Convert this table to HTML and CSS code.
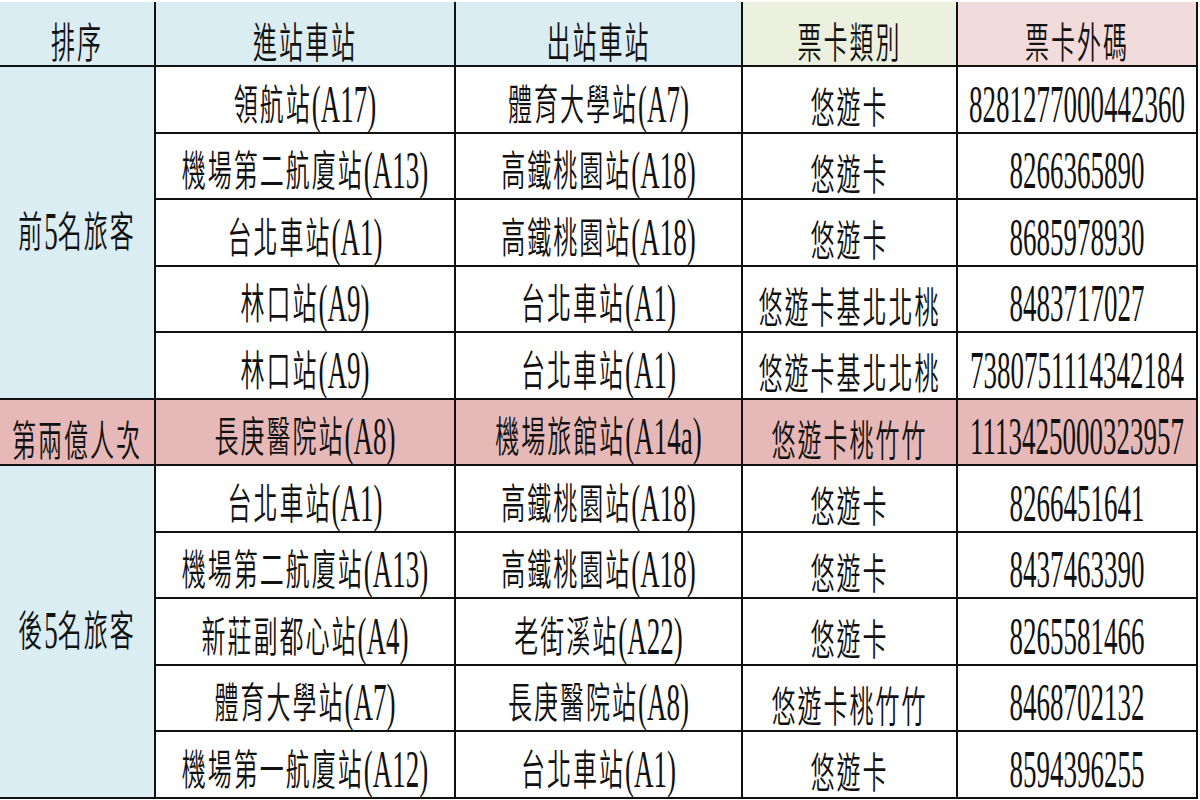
FILE: index.html
```html
<!DOCTYPE html>
<html lang="zh-Hant">
<head>
<meta charset="utf-8">
<title>桃園機場捷運 旅客排序</title>
<link rel="stylesheet" href="styles.css">
</head>
<body>
<div class="sheet">
  <div class="cell blue hd"><span class="t">排序</span></div>
  <div class="cell blue hd"><span class="t">進站車站</span></div>
  <div class="cell blue hd"><span class="t">出站車站</span></div>
  <div class="cell olive hd"><span class="t">票卡類別</span></div>
  <div class="cell pink hd"><span class="t">票卡外碼</span></div>

  <div class="cell blue group"><span class="t">前<span class="l">5</span>名旅客</span></div>
  <div class="cell"><span class="t">領航站<span class="l">(A17)</span></span></div>
  <div class="cell"><span class="t">體育大學站<span class="l">(A7)</span></span></div>
  <div class="cell"><span class="t">悠遊卡</span></div>
  <div class="cell"><span class="t"><span class="l">8281277000442360</span></span></div>

  <div class="cell"><span class="t">機場第二航廈站<span class="l">(A13)</span></span></div>
  <div class="cell"><span class="t">高鐵桃園站<span class="l">(A18)</span></span></div>
  <div class="cell"><span class="t">悠遊卡</span></div>
  <div class="cell"><span class="t"><span class="l">8266365890</span></span></div>

  <div class="cell"><span class="t">台北車站<span class="l">(A1)</span></span></div>
  <div class="cell"><span class="t">高鐵桃園站<span class="l">(A18)</span></span></div>
  <div class="cell"><span class="t">悠遊卡</span></div>
  <div class="cell"><span class="t"><span class="l">8685978930</span></span></div>

  <div class="cell"><span class="t">林口站<span class="l">(A9)</span></span></div>
  <div class="cell"><span class="t">台北車站<span class="l">(A1)</span></span></div>
  <div class="cell"><span class="t">悠遊卡基北北桃</span></div>
  <div class="cell"><span class="t"><span class="l">8483717027</span></span></div>

  <div class="cell"><span class="t">林口站<span class="l">(A9)</span></span></div>
  <div class="cell"><span class="t">台北車站<span class="l">(A1)</span></span></div>
  <div class="cell"><span class="t">悠遊卡基北北桃</span></div>
  <div class="cell"><span class="t"><span class="l">7380751114342184</span></span></div>

  <div class="cell rose"><span class="t">第兩億人次</span></div>
  <div class="cell rose"><span class="t">長庚醫院站<span class="l">(A8)</span></span></div>
  <div class="cell rose"><span class="t">機場旅館站<span class="l">(A14a)</span></span></div>
  <div class="cell rose"><span class="t">悠遊卡桃竹竹</span></div>
  <div class="cell rose"><span class="t"><span class="l">1113425000323957</span></span></div>

  <div class="cell blue group"><span class="t">後<span class="l">5</span>名旅客</span></div>
  <div class="cell"><span class="t">台北車站<span class="l">(A1)</span></span></div>
  <div class="cell"><span class="t">高鐵桃園站<span class="l">(A18)</span></span></div>
  <div class="cell"><span class="t">悠遊卡</span></div>
  <div class="cell"><span class="t"><span class="l">8266451641</span></span></div>

  <div class="cell"><span class="t">機場第二航廈站<span class="l">(A13)</span></span></div>
  <div class="cell"><span class="t">高鐵桃園站<span class="l">(A18)</span></span></div>
  <div class="cell"><span class="t">悠遊卡</span></div>
  <div class="cell"><span class="t"><span class="l">8437463390</span></span></div>

  <div class="cell"><span class="t">新莊副都心站<span class="l">(A4)</span></span></div>
  <div class="cell"><span class="t">老街溪站<span class="l">(A22)</span></span></div>
  <div class="cell"><span class="t">悠遊卡</span></div>
  <div class="cell"><span class="t"><span class="l">8265581466</span></span></div>

  <div class="cell"><span class="t">體育大學站<span class="l">(A7)</span></span></div>
  <div class="cell"><span class="t">長庚醫院站<span class="l">(A8)</span></span></div>
  <div class="cell"><span class="t">悠遊卡桃竹竹</span></div>
  <div class="cell"><span class="t"><span class="l">8468702132</span></span></div>

  <div class="cell"><span class="t">機場第一航廈站<span class="l">(A12)</span></span></div>
  <div class="cell"><span class="t">台北車站<span class="l">(A1)</span></span></div>
  <div class="cell"><span class="t">悠遊卡</span></div>
  <div class="cell"><span class="t"><span class="l">8594396255</span></span></div>
</div>
</body>
</html>
```

FILE: styles.css
```css
html, body {
  margin: 0;
  padding: 0;
  background: #ffffff;
}

body {
  padding-top: 2px;
  width: 1200px;
}

.sheet {
  display: grid;
  grid-template-columns: 154px 298px 285px 213px 238px;
  grid-template-rows: 63px repeat(11, 64.5px);
  gap: 2px;
  width: 1196px;
  background: #111111;
  border-right: 2px solid #111111;
  border-bottom: 2px solid #111111;
}

.cell {
  display: flex;
  align-items: center;
  justify-content: center;
  padding-top: 12px;
  box-sizing: border-box;
  background: #ffffff;
  color: #111111;
  font-family: "Noto Sans CJK TC", "Noto Sans CJK SC", sans-serif;
  font-size: 24px;
  font-weight: 350;
  letter-spacing: 2px;
}

.cell.group {
  grid-row: span 5;
  padding-top: 0;
}

.blue { background: #daedf3; }
.olive { background: #ebf1de; }
.pink { background: #f2dcdb; }
.rose { background: #e6b9b8; }

.t {
  display: inline-block;
  white-space: nowrap;
  line-height: 1;
  transform: scaleY(1.75);
}

.l {
  display: inline-block;
  font-family: "Liberation Serif", "Times New Roman", serif;
  font-size: 27px;
  font-weight: 400;
  letter-spacing: 0;
  transform: scaleY(1.13);
}
```
